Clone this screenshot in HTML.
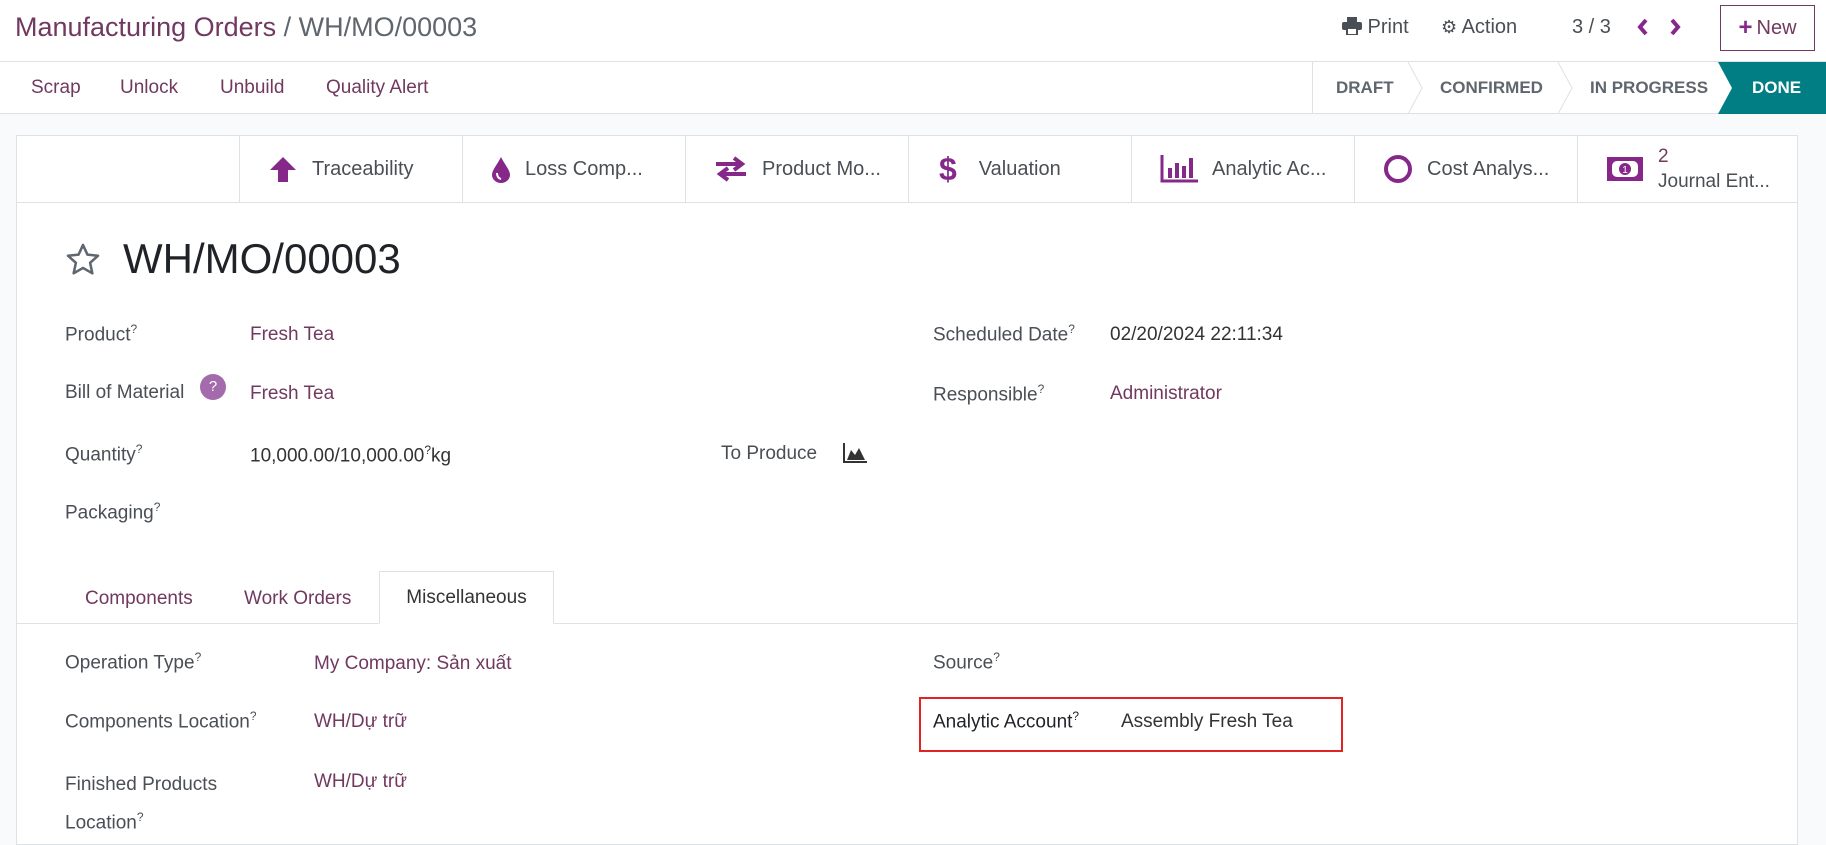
<!DOCTYPE html>
<html><head><meta charset="utf-8"><style>
*{box-sizing:border-box;margin:0;padding:0}
body{width:1826px;height:834px;overflow:hidden;background:#f9fafb;font-family:"Liberation Sans","Noto Sans CJK SC",sans-serif;color:#4a4f55;position:relative}
.a{position:absolute;white-space:nowrap}
.p{color:#71395f}
.top{position:absolute;left:0;top:0;width:1826px;height:62px;background:#fff;border-bottom:1px solid #dee2e6}
.bar{position:absolute;left:0;top:62px;width:1826px;height:52px;background:#fff;border-bottom:1px solid #dee2e6}
.card{position:absolute;left:16px;top:135px;width:1782px;height:710px;background:#fff;border:1px solid #dee2e6}
.btn{position:absolute;top:0;height:66px;width:223px;border-left:1px solid #dee2e6;display:flex;align-items:center;font-size:20px;color:#4a4f55}
.btn svg{margin:0 14px 0 28px}
.lbl{font-size:19px;color:#4a4f55}
.val{font-size:19px}
sup{font-size:12px}
</style></head><body>
<div class="top">
 <div class="a" style="left:15px;top:12px;font-size:27px"><span class="p">Manufacturing Orders</span> <span style="color:#5f666d">/ WH/MO/00003</span></div>
 <div class="a" style="left:1342px;top:16px;font-size:20px;color:#4a4f55"><svg width="20" height="18" viewBox="0 0 20 18" style="vertical-align:-2px"><rect x="5" y="0" width="10" height="5" fill="#4a4f55"/><rect x="0" y="5" width="20" height="8" rx="2" fill="#4a4f55"/><rect x="5" y="11" width="10" height="7" fill="#fff" stroke="#4a4f55" stroke-width="2"/></svg> Print</div>
 <div class="a" style="left:1441px;top:16px;font-size:20px;color:#4a4f55"><span style="font-size:18px">⚙</span> Action</div>
 <div class="a" style="left:1572px;top:16px;font-size:20px;color:#4a4f55">3 / 3</div>
 <svg class="a" style="left:1636px;top:17px" width="60" height="20"><path d="M10 3 L4 10 L10 17" stroke="#86288a" stroke-width="4" fill="none"/><path d="M36 3 L42 10 L36 17" stroke="#86288a" stroke-width="4" fill="none"/></svg>
 <div class="a" style="left:1720px;top:5px;width:95px;height:46px;border:1px solid #71395f;font-size:20px;color:#71395f;display:flex;align-items:center;justify-content:center"><b style="font-size:24px;margin-right:4px;color:#86288a">+</b>New</div>
</div>
<div class="bar">
 <div class="a p" style="left:31px;top:15px;font-size:19px">Scrap</div>
 <div class="a p" style="left:120px;top:15px;font-size:19px">Unlock</div>
 <div class="a p" style="left:220px;top:15px;font-size:19px">Unbuild</div>
 <div class="a p" style="left:326px;top:15px;font-size:19px">Quality Alert</div>
 <div class="a" style="left:1312px;top:0;height:51px;border-left:1px solid #dee2e6"></div>
 <svg class="a" style="left:1312px;top:0" width="514" height="52">
  <path d="M96 0 L110 26 L96 52" stroke="#dee2e6" fill="none"/>
  <path d="M246 0 L260 26 L246 52" stroke="#dee2e6" fill="none"/>
  <path d="M406 0 L420 26 L406 52 L514 52 L514 0Z" fill="#017e84"/>
 </svg>
 <div class="a" style="left:1336px;top:16px;font-size:17px;font-weight:bold;color:#5f666d">DRAFT</div>
 <div class="a" style="left:1440px;top:16px;font-size:17px;font-weight:bold;color:#5f666d">CONFIRMED</div>
 <div class="a" style="left:1590px;top:16px;font-size:17px;font-weight:bold;color:#5f666d">IN PROGRESS</div>
 <div class="a" style="left:1752px;top:16px;font-size:17px;font-weight:bold;color:#fff">DONE</div>
</div>
<div class="card">
 <div class="a" style="left:0;top:66px;width:1780px;border-top:1px solid #dee2e6"></div>
 <div class="btn" style="left:222px"><svg width="30" height="28" viewBox="0 0 30 28"><path d="M15 2 L28 15 L20 15 L20 27 L10 27 L10 15 L2 15Z" fill="#86288a"/></svg>Traceability</div>
 <div class="btn" style="left:445px"><svg width="20" height="28" viewBox="0 0 20 28"><path d="M10 2 C14 10 19 15 19 20 A9 8 0 0 1 1 20 C1 15 6 10 10 2Z" fill="#86288a"/><path d="M6 18 Q6 23 10 24" stroke="#fff" stroke-width="2" fill="none"/></svg>Loss Comp...</div>
 <div class="btn" style="left:668px"><svg width="34" height="26" viewBox="0 0 34 26"><path d="M2 8 H26 M20 2 L28 8 L20 14 M32 18 H8 M14 12 L6 18 L14 24" stroke="#86288a" stroke-width="4" fill="none"/></svg>Product Mo...</div>
 <div class="btn" style="left:891px"><span style="color:#86288a;font-size:32px;font-weight:bold;margin:0 22px 0 30px">$</span>Valuation</div>
 <div class="btn" style="left:1114px"><svg width="38" height="28" viewBox="0 0 38 28"><path d="M2 0 V26 H38" stroke="#86288a" stroke-width="3" fill="none"/><rect x="8" y="13" width="4" height="10" fill="#86288a"/><rect x="15" y="8" width="4" height="15" fill="#86288a"/><rect x="22" y="11" width="4" height="12" fill="#86288a"/><rect x="29" y="3" width="4" height="20" fill="#86288a"/></svg>Analytic Ac...</div>
 <div class="btn" style="left:1337px"><svg width="30" height="30" viewBox="0 0 30 30"><circle cx="15" cy="15" r="12" stroke="#86288a" stroke-width="4" fill="none"/></svg>Cost Analys...</div>
 <div class="btn" style="left:1560px;align-items:flex-start;padding-top:8px"><svg width="38" height="26" viewBox="0 0 38 26" style="margin-top:12px"><rect x="1" y="1" width="36" height="24" fill="#86288a"/><rect x="6" y="5" width="26" height="16" rx="5" fill="#fff"/><circle cx="19" cy="13" r="6" fill="#86288a"/><text x="19" y="17" font-size="10" fill="#fff" text-anchor="middle" font-family="Liberation Sans">1</text></svg><div style="line-height:25px;font-size:19px"><span class="p">2</span><br>Journal Ent...</div></div>

 <svg class="a" style="left:46px;top:105px" width="40" height="38" viewBox="0 0 24 24"><path d="M12 2.5 L14.8 8.6 L21.5 9.3 L16.5 13.8 L17.9 20.4 L12 17 L6.1 20.4 L7.5 13.8 L2.5 9.3 L9.2 8.6Z" stroke="#5f666d" stroke-width="1.6" fill="none" stroke-linejoin="round"/></svg>
 <div class="a" style="left:106px;top:99px;font-size:42px;color:#1f2328">WH/MO/00003</div>

 <div class="a lbl" style="left:48px;top:186px">Product<sup>?</sup></div>
 <div class="a val p" style="left:233px;top:188px">Fresh Tea</div>
 <div class="a lbl" style="left:48px;top:246px">Bill of Material</div>
 <div class="a" style="left:183px;top:238px;width:26px;height:26px;border-radius:50%;background:#a36bab;color:#fff;font-size:15px;text-align:center;line-height:26px">?</div>
 <div class="a val p" style="left:233px;top:247px">Fresh Tea</div>
 <div class="a lbl" style="left:48px;top:306px">Quantity<sup>?</sup></div>
 <div class="a val" style="left:233px;top:307px;color:#333">10,000.00/10,000.00<sup>?</sup>kg</div>
 <div class="a lbl" style="left:704px;top:307px">To Produce</div>
 <svg class="a" style="left:826px;top:307px" width="24" height="20" viewBox="0 0 24 20"><path d="M1 0 V19 H24" stroke="#333" stroke-width="2" fill="none"/><path d="M4 17 L8 7 L12 12 L16 5 L22 17Z" fill="#333"/></svg>
 <div class="a lbl" style="left:48px;top:364px">Packaging<sup>?</sup></div>

 <div class="a lbl" style="left:916px;top:186px">Scheduled Date<sup>?</sup></div>
 <div class="a val" style="left:1093px;top:188px;color:#333">02/20/2024 22:11:34</div>
 <div class="a lbl" style="left:916px;top:246px">Responsible<sup>?</sup></div>
 <div class="a val p" style="left:1093px;top:247px">Administrator</div>

 <div class="a" style="left:0;top:487px;width:1780px;border-top:1px solid #dee2e6"></div>
 <div class="a val p" style="left:68px;top:452px">Components</div>
 <div class="a val p" style="left:227px;top:452px">Work Orders</div>
 <div class="a" style="left:362px;top:435px;width:175px;height:53px;border:1px solid #dee2e6;border-bottom:1px solid #fff;background:#fff;font-size:19px;color:#333;text-align:center;line-height:52px">Miscellaneous</div>

 <div class="a lbl" style="left:48px;top:514px">Operation Type<sup>?</sup></div>
 <div class="a val p" style="left:297px;top:517px">My Company: Sản xuất</div>
 <div class="a lbl" style="left:48px;top:573px">Components Location<sup>?</sup></div>
 <div class="a val p" style="left:297px;top:575px">WH/Dự trữ</div>
 <div class="a lbl" style="left:48px;top:633px;line-height:32px">Finished Products<br>Location<sup>?</sup></div>
 <div class="a val p" style="left:297px;top:635px">WH/Dự trữ</div>

 <div class="a lbl" style="left:916px;top:514px">Source<sup>?</sup></div>
 <div class="a" style="left:902px;top:561px;width:424px;height:55px;border:2px solid #e02424"></div>
 <div class="a lbl" style="left:916px;top:573px;color:#1f2328">Analytic Account<sup>?</sup></div>
 <div class="a val" style="left:1104px;top:575px;color:#333">Assembly Fresh Tea</div>
</div>
</body></html>
